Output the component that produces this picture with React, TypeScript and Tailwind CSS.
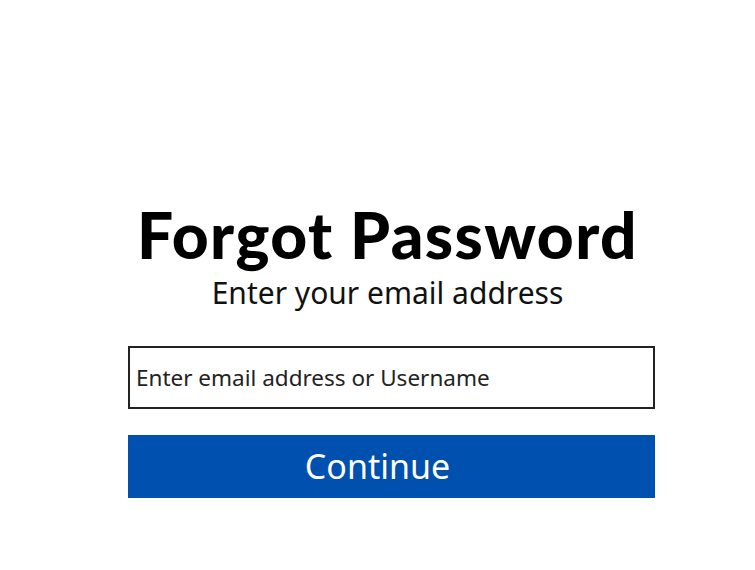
export default function App() {
  return (
    <div className="w-[755px] h-[570px] bg-white overflow-hidden">
      <div className="pt-[198px] pl-[128px] w-[655px] flex flex-col">
        <h1 className="pr-[8px] text-center text-[64px] leading-[74px] font-black tracking-[1.4px] text-black font-['Lato',sans-serif]">
          Forgot Password
        </h1>
        <p className="mt-[3px] pr-[8px] text-center text-[30px] leading-[36px] text-[#111] font-['Noto_Sans',sans-serif]">
          Enter your email address
        </p>
        <div className="mt-[35px] h-[63px] border-2 border-[#222] flex items-center px-[6px]">
          <span className="text-[22.5px] text-[#222] font-['Noto_Sans',sans-serif]">
            Enter email address or Username
          </span>
        </div>
        <button className="mt-[26px] w-full h-[63px] bg-[#0050b0] text-white text-[34px] flex items-center justify-center pr-[28px] font-['Noto_Sans',sans-serif]">
          Continue
        </button>
      </div>
    </div>
  );
}
